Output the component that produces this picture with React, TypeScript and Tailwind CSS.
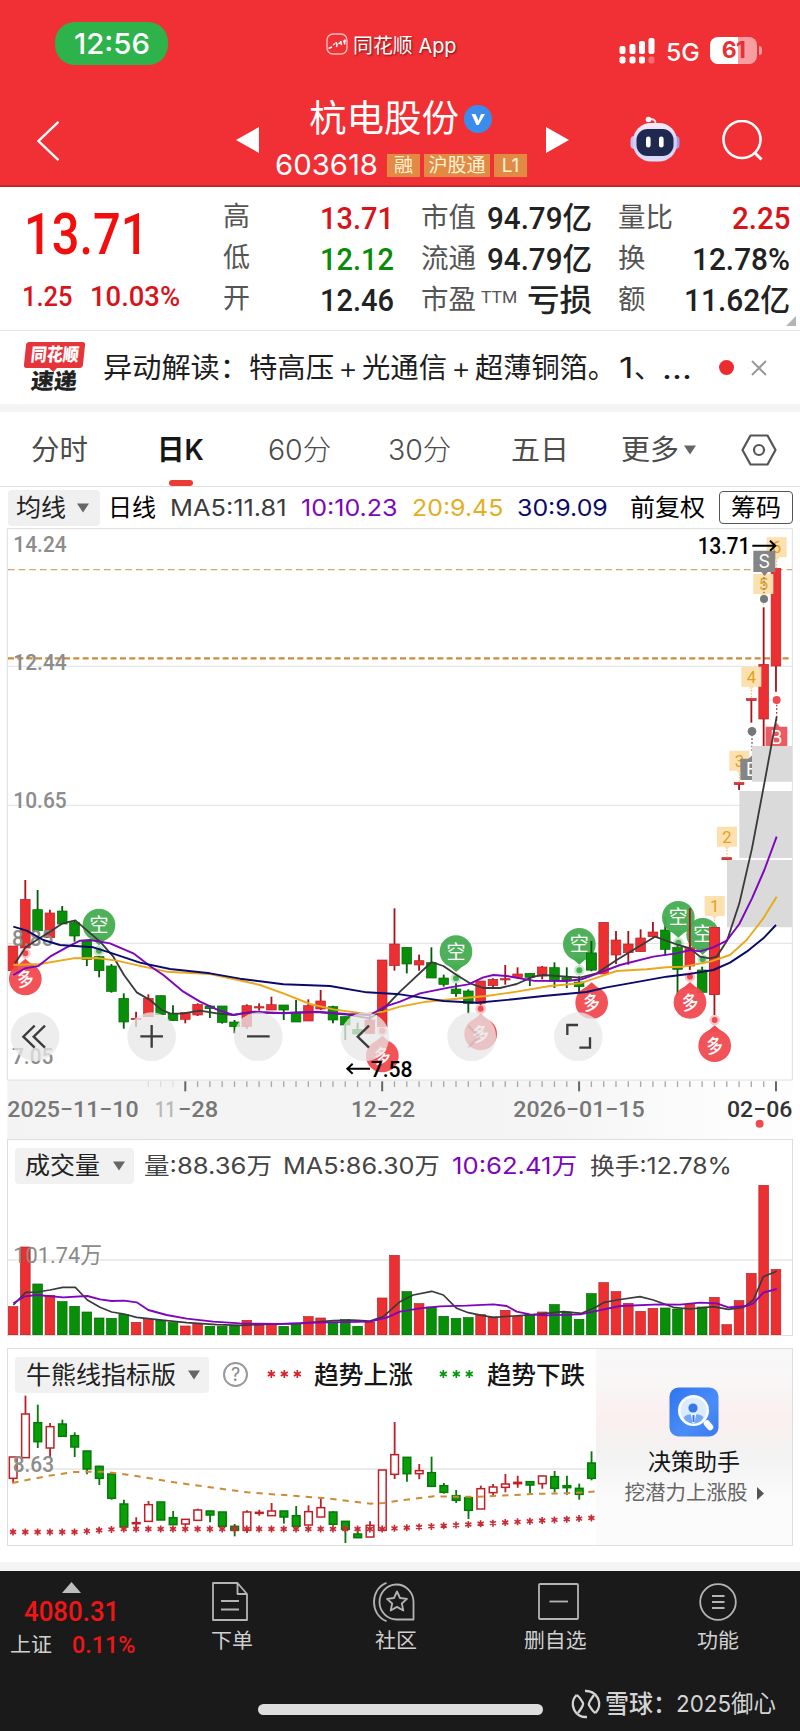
import { useLayoutEffect, useRef, type ReactNode } from "react";

const SC = "font-['Inter','Noto_Sans_CJK_SC',sans-serif]";
const DIN = "font-['Roboto','Noto_Sans_CJK_SC',sans-serif]";

/* One line of text, stretched horizontally to fill the width of its box. */
function Fit({ className = "", children }: { className?: string; children: ReactNode }) {
  const box = useRef<HTMLSpanElement>(null);
  const inner = useRef<HTMLSpanElement>(null);
  useLayoutEffect(() => {
    const b = box.current;
    const t = inner.current;
    if (b && t && t.offsetWidth) {
      t.style.transform = `scaleX(${b.clientWidth / t.offsetWidth})`;
    }
  }, [children]);
  return (
    <span ref={box} className={`block shrink-0 whitespace-nowrap ${className}`}>
      <span ref={inner} className="inline-block origin-left">
        {children}
      </span>
    </span>
  );
}

function Caret({ className = "" }: { className?: string }) {
  return (
    <svg viewBox="0 0 14 10" className={`shrink-0 ${className}`}>
      <path d="M1 .5h12L7 9.5z" fill="currentColor" />
    </svg>
  );
}

/* ---------- data, in thirds of a pixel ---------- */
type Candle = [number, number, number, number, "R" | "G"];
const STEP = 36.918;
const X0 = 39;
const cx = (i: number) => X0 + i * STEP;

const candles: Candle[] = [
  [258, 258, 332, 332, "R"], [60, 118, 264, 264, "R"], [90, 149, 212, 212, "G"], [149, 159, 233, 233, "R"],
  [138, 153, 192, 192, "G"], [180, 188, 228, 245, "G"], [243, 243, 298, 318, "G"], [288, 290, 332, 352, "G"],
  [312, 318, 394, 398, "G"], [400, 415, 486, 506, "G"], [455, 475, 479, 500, "R"], [403, 415, 470, 470, "R"],
  [407, 407, 464, 464, "G"], [436, 460, 482, 482, "G"], [458, 458, 478, 490, "R"], [430, 433, 465, 468, "R"],
  [435, 438, 446, 474, "G"], [438, 438, 487, 491, "G"], [480, 486, 500, 520, "G"], [433, 437, 500, 506, "R"],
  [430, 440, 444, 452, "R"], [410, 434, 450, 450, "R"], [435, 435, 450, 480, "G"], [420, 458, 486, 486, "G"],
  [418, 437, 483, 483, "R"], [390, 423, 447, 450, "R"], [437, 440, 480, 490, "G"], [470, 470, 495, 540, "G"],
  [488, 508, 522, 524, "G"], [460, 480, 520, 520, "R"], [300, 300, 500, 500, "R"], [145, 252, 317, 332, "R"],
  [262, 262, 312, 340, "G"], [284, 302, 315, 332, "R"], [262, 308, 354, 354, "G"], [344, 354, 373, 380, "G"],
  [370, 387, 401, 410, "G"], [388, 393, 430, 461, "G"], [363, 363, 430, 436, "R"], [355, 358, 377, 386, "R"],
  [315, 356, 360, 374, "R"], [322, 342, 352, 356, "R"], [340, 340, 352, 378, "G"], [318, 321, 348, 358, "R"],
  [307, 323, 362, 384, "G"], [322, 353, 359, 384, "G"], [349, 366, 380, 400, "G"], [243, 279, 330, 334, "G"],
  [186, 187, 342, 342, "R"], [213, 240, 285, 312, "R"], [213, 252, 278, 314, "R"], [208, 234, 275, 275, "R"],
  [186, 216, 230, 232, "R"], [172, 210, 268, 286, "G"], [255, 262, 328, 408, "G"], [145, 262, 318, 330, "R"],
  [320, 330, 397, 400, "G"], [202, 202, 403, 465, "R"], [-7, -7, -1, -1, "R"], [-232, -232, -226, -210, "R"],
  [-484, -484, -478, -412, "R"], [-758, -587, -423, -342, "R"], [-875, -875, -582, -505, "R"],
];

const volumes: [number, "R" | "G"][] = [
  [529, "R"], [350, "R"], [461, "G"], [495, "R"], [514, "G"], [528, "G"], [545, "G"], [563, "G"], [564, "G"],
  [552, "G"], [576, "R"], [568, "R"], [570, "G"], [577, "G"], [587, "R"], [582, "R"], [588, "G"], [588, "G"],
  [588, "G"], [570, "R"], [582, "R"], [580, "R"], [588, "G"], [582, "G"], [559, "R"], [563, "R"], [575, "G"],
  [568, "G"], [588, "G"], [575, "R"], [503, "R"], [375, "R"], [484, "G"], [520, "R"], [530, "G"], [558, "G"],
  [564, "G"], [562, "G"], [553, "R"], [560, "R"], [540, "R"], [558, "R"], [552, "G"], [545, "R"], [523, "G"],
  [545, "G"], [567, "G"], [490, "G"], [457, "R"], [484, "R"], [519, "R"], [543, "R"], [534, "R"], [533, "G"],
  [536, "G"], [522, "R"], [530, "G"], [501, "R"], [583, "R"], [511, "R"], [429, "R"], [165, "R"], [417, "R"],
];

const trend: Candle[] = [
  [352, 352, 416, 430, "R"], [168, 223, 354, 354, "R"], [195, 249, 306, 325, "G"], [250, 261, 325, 355, "R"],
  [240, 253, 290, 290, "G"], [278, 288, 322, 352, "G"], [334, 334, 388, 404, "G"], [378, 380, 416, 436, "G"],
  [398, 403, 476, 480, "G"], [480, 493, 562, 562, "G"], [533, 549, 552, 565, "R"], [484, 495, 545, 545, "R"],
  [487, 487, 541, 541, "G"], [514, 534, 555, 556, "G"], [538, 539, 553, 558, "R"], [507, 511, 542, 542, "R"],
  [514, 514, 526, 548, "G"], [517, 517, 560, 560, "G"], [553, 560, 572, 590, "G"], [512, 517, 572, 580, "R"],
  [510, 518, 521, 528, "R"], [490, 514, 528, 528, "R"], [514, 514, 532, 552, "G"], [499, 528, 560, 560, "G"],
  [497, 516, 556, 556, "R"], [474, 504, 532, 532, "R"], [515, 517, 554, 558, "G"], [545, 545, 569, 610, "G"],
  [570, 583, 594, 594, "G"], [545, 557, 592, 592, "R"], [391, 391, 572, 572, "R"], [247, 345, 404, 418, "R"],
  [353, 353, 402, 426, "G"], [373, 393, 402, 419, "R"], [351, 399, 440, 440, "G"], [430, 438, 458, 462, "G"],
  [451, 468, 482, 490, "G"], [472, 474, 512, 538, "G"], [438, 447, 508, 508, "R"], [433, 442, 459, 470, "R"],
  [403, 433, 443, 458, "R"], [408, 428, 432, 444, "R"], [426, 426, 436, 460, "G"], [408, 409, 432, 447, "R"],
  [394, 411, 446, 458, "G"], [408, 438, 444, 465, "G"], [432, 446, 464, 480, "G"], [335, 370, 416, 422, "G"],
];
const starY = (i: number) =>
  i < 6 ? 577 : i < 9 ? 577 - (i - 5) * 2.6 : i < 31 ? 568 : 568 - (i - 30) * 1.95;

const MA5 = "45,310 77,262 110,240 150,215 188,190 226,181 300,245 340,290 372,345 410,397 450,420 485,450 510,460 545,461 600,452 650,460 700,465 740,458 850,459 950,456 1040,464 1110,475 1147,450 1200,395 1295,306 1330,318 1370,345 1410,370 1450,384 1500,384 1550,372 1600,350 1630,345 1700,350 1740,353 1790,340 1850,300 1965,230 2035,255 2070,265 2100,290 2130,295 2150,290 2181,242 2218,130 2256,-35 2293,-230 2330,-430";
const MA10 = "40,345 75,325 115,318 150,290 200,262 240,242 270,240 330,250 400,280 450,318 490,345 550,395 600,425 650,448 700,465 760,455 850,460 950,455 1040,462 1110,465 1155,440 1200,425 1260,400 1350,382 1405,373 1450,352 1480,345 1520,348 1600,362 1700,363 1745,358 1800,338 1860,315 1960,290 2030,280 2070,270 2100,274 2140,262 2180,242 2218,192 2256,115 2293,30 2330,-70";
const MA20 = "40,315 120,312 220,295 290,294 350,302 430,320 500,335 630,342 700,357 780,375 850,400 930,432 1000,448 1100,462 1150,455 1200,440 1280,425 1400,413 1460,408 1550,395 1650,378 1740,370 1800,350 1850,333 1940,328 2000,322 2050,320 2130,305 2190,285 2240,240 2290,175 2330,110";
const MA30 = "40,200 80,212 130,240 180,255 280,262 330,278 420,308 510,327 630,340 720,356 850,373 990,378 1100,397 1200,403 1260,412 1330,423 1430,428 1540,418 1630,408 1760,396 1820,382 1900,368 2000,350 2060,343 2140,330 2190,308 2240,275 2290,235 2328,195";
const VMA5 = "40,525 77,487 110,486 150,480 188,472 226,472 262,510 300,532 335,546 372,552 410,562 500,572 560,578 650,584 720,586 830,582 900,580 1000,572 1060,570 1110,573 1150,560 1200,515 1240,495 1295,484 1330,495 1370,535 1405,548 1445,556 1480,562 1540,558 1600,554 1640,550 1690,545 1745,550 1790,530 1810,518 1850,510 1920,500 1960,510 2020,532 2070,537 2140,530 2185,538 2230,532 2260,510 2290,440 2330,424";
const VMA10 = "40,520 75,499 110,495 190,502 262,498 300,508 335,513 372,512 410,517 445,540 500,555 560,566 640,575 720,580 840,582 950,578 1110,575 1160,563 1200,545 1260,535 1320,529 1400,527 1480,523 1520,528 1550,545 1590,553 1640,556 1740,553 1780,545 1860,528 1980,523 2040,524 2100,518 2150,520 2185,532 2240,528 2260,520 2290,488 2330,477";
const BULL = "35,430 75,422 140,409 220,397 310,396 380,405 520,428 740,458 980,476 1110,492 1150,490 1200,482 1300,470 1370,471 1430,471 1500,468 1600,463 1720,460 1790,455";

/* Price labels are 68 units tall (about 23px). */
function Label({ x, y, w, fill = "#8c8c8c", size = 68, weight = 500, children }: {
  x: number; y: number; w: number; fill?: string; size?: number; weight?: number; children: string;
}) {
  return (
    <text x={x} y={y} textLength={w} lengthAdjust="spacingAndGlyphs" fill={fill} fontSize={size} fontWeight={weight} className={DIN}>
      {children}
    </text>
  );
}

function Pin({ x, y, kind, dot = 0 }: { x: number; y: number; kind: "空" | "多"; dot?: number }) {
  const up = kind === "多";
  const c = up ? "#f04a50" : "#45ad50";
  const s = up ? -1 : 1;
  return (
    <g>
      {dot !== 0 && (
        <>
          <circle cx={x} cy={dot} r="16" fill={c} opacity=".3" />
          <circle cx={x} cy={dot} r="9" fill={c} />
        </>
      )}
      <path d={`M${x - 24} ${y + s * 40}L${x} ${y + s * 61}L${x + 24} ${y + s * 40}z`} fill={c} />
      <circle cx={x} cy={y} r="49" fill={c} opacity=".95" />
      <text
        x={x} y={y + 21} textAnchor="middle" fontSize="57" fill="#fff"
        fontWeight={up ? 500 : 400}
        transform={up ? `translate(${x} ${y}) rotate(-8) scale(.88 1) translate(${-x} ${-y})` : undefined}
        className={SC}
      >
        {kind}
      </text>
    </g>
  );
}

function Flag({ x, y, n }: { x: number; y: number; n: string }) {
  return (
    <g>
      <path d={`M${x - 30} ${y - 30}h60v60h-22l-8 10l-8 -10h-22z`} fill="#fde0b0" />
      <text x={x} y={y + 18} textAnchor="middle" fontSize="50" fill="#e0a21c" className={DIN}>{n}</text>
      <path d={`M${x} ${y + 40}v24`} stroke="#e8b96a" strokeWidth="3" strokeDasharray="5 4" />
    </g>
  );
}

function PriceChart() {
  return (
    <svg viewBox="0 0 2400 1833" className="block h-[611px] w-[800px]">
      <defs>
        <linearGradient id="axis" x1="0" x2="1" y1="0" y2="0">
          <stop offset="0" stopColor="#f3f3f3" />
          <stop offset=".7" stopColor="#f5f5f5" />
          <stop offset=".92" stopColor="#fdfdfd" />
        </linearGradient>
      </defs>
      <rect x="22" y="1656" width="2356" height="177" fill="url(#axis)" />
      <path d="M22 2V1656H2377V2z" fill="#fff" stroke="#dedede" strokeWidth="3" />
      <path d="M24 415H2376M24 832H2376M24 1246H2376" stroke="#e6e6e6" strokeWidth="3.500" />
      <path d="M24 125H2376" stroke="#d1a76c" strokeWidth="3.500" strokeDasharray="20 12" />
      <path d="M24 391H2376" stroke="#cb8b3c" strokeWidth="6.500" strokeDasharray="18 10" />
      <Label x={40} y={72} w={160}>14.24</Label>
      <Label x={40} y={425} w={160}>12.44</Label>
      <Label x={40} y={841} w={160}>10.65</Label>
      <g transform="translate(0 996)">
        {candles.map(([t, a, b, l, k], i) => (
          <g key={i}>
            <path d={`M${cx(i)} ${t}V${l}`} stroke={k === "R" ? "#a8141a" : "#045c08"} strokeWidth="5.500" />
            <rect
              x={cx(i) - 14.5} y={a} width="29" height={Math.max(b - a, 4)} strokeWidth="2"
              fill={k === "R" ? "#ec2f31" : "#079007"} stroke={k === "R" ? "#b0252a" : "#056305"}
            />
          </g>
        ))}
        <Label x={36} y={258} w={124}>8.85</Label>
        <Label x={36} y={613} w={124}>7.05</Label>
        <Flag x={2144} y={138} n="1" />
        <Flag x={2181} y={-70} n="2" />
        <Flag x={2218} y={-298} n="3" />
        <Flag x={2254} y={-550} n="4" />
        <Flag x={2290} y={-828} n="5" />
        <Flag x={2330} y={-938} n="6" />
        <path d="M2221 -304h24l12-10l12 10h16v64h-64z" fill="#858585" />
        <text x="2238" y="-252" fontSize="54" fill="#fff" className={SC}>B</text>
        <path d="M2256 -376v48" stroke="#555" strokeWidth="4" strokeDasharray="5 6" />
        <circle cx="2256" cy="-386" r="13" fill="#777" />
        <path d="M2260 -928h66v64h-22l-10 12l-10 -12h-24z" fill="#858585" />
        <text x="2293" y="-877" textAnchor="middle" fontSize="54" fill="#fff" className={SC}>S</text>
        <path d="M2292 -860v60" stroke="#777" strokeWidth="4" strokeDasharray="5 6" />
        <circle cx="2292" cy="-783" r="12" fill="#777" />
        <path d="M2297 -400h24l9-12l9 12h23v60h-65z" fill="#ee5a60" />
        <text x="2329" y="-348" textAnchor="middle" fontSize="54" fill="#fff" className={SC}>B</text>
        <circle cx="2330" cy="-480" r="12" fill="#ee4a50" />
        <path d="M2330 -466v48" stroke="#b5393d" strokeWidth="4" strokeDasharray="5 6" />
        <path d="M2256 -342H2376V-235H2256zM2218 -207H2376V-6H2218zM2181 0H2376V202H2181z" fill="#dadada" />
        <Pin x={297} y={195} kind="空" dot={272} />
        <Pin x={1368} y={275} kind="空" dot={355} />
        <Pin x={1738} y={253} kind="空" dot={331} />
        <path d={`M${cx(47)} 243V279`} stroke="#045c08" strokeWidth="5.500" />
        <rect x={cx(47) - 14.5} y="279" width="29" height="51" fill="#079007" stroke="#056305" strokeWidth="2" />
        <Pin x={2035} y={172} kind="空" dot={248} />
        <Pin x={2108} y={223} kind="空" dot={298} />
        <rect x={cx(57) - 14.5} y="202" width="29" height="201" fill="#ec2f31" stroke="#b0252a" strokeWidth="2" />
        <path d={`M${cx(55)} 145V262`} stroke="#a8141a" strokeWidth="5.500" />
        <Pin x={76} y={357} kind="多" dot={280} />
        <Pin x={1147} y={588} kind="多" dot={512} />
        <Pin x={1442} y={522} kind="多" dot={446} />
        <Pin x={1775} y={428} kind="多" />
        <Pin x={2070} y={427} kind="多" dot={350} />
        <Pin x={2144} y={557} kind="多" dot={480} />
        <g fill="none" strokeWidth="5.800" strokeLinejoin="round">
          <polyline points={MA5} stroke="#3a3a3a" strokeWidth="5.500" />
          <polyline points={MA20} stroke="#eaa81b" />
          <polyline points={MA10} stroke="#7d06bd" />
          <polyline points={MA30} stroke="#0a0a6b" />
        </g>
        <g fill="#e8e8e8" opacity=".76">
          {[105, 455, 775, 1095, 1415, 1735].map((x) => (
            <circle key={x} cx={x} cy="530" r="73" />
          ))}
        </g>
        <g fill="none" stroke="#3c3c3c" strokeWidth="7">
          <path d="M104 497L70 530L104 563M135 497L101 530L135 563M421 529h68M455 495v68M741 529h68M1107 497L1073 530L1107 563" />
          <path d="M1702 525v-30h32M1770 532v31h-32" />
          <path d="M1404 497L1438 530L1404 563" opacity=".1" />
        </g>
        <path d="M1110 626H1042M1058 611L1042 626L1058 641" fill="none" stroke="#000" strokeWidth="6" />
        <Label x={1112} y={650} w={126} fill="#000">7.58</Label>
      </g>
      <Label x={2093} y={79} w={158} fill="#000" size={71}>13.71</Label>
      <path d="M2257 53H2326M2310 38L2326 53L2310 68" fill="none" stroke="#000" strokeWidth="6" />
      {Array.from({ length: 52 }, (_, k) => k + 11).map((i) => {
        const big = i % 16 === 14;
        return (
          <path key={i} d={`M${cx(i)} ${1660}v${big ? 30 : 17}`} strokeWidth={big ? 6 : 4}
            stroke={big ? "#666" : i < 14 ? "#ddd" : "#a8a8a8"} />
        );
      })}
      <Label x={22} y={1766} w={394} fill="#777">2025−11−10</Label>
      <Label x={464} y={1766} w={64} fill="#b9b9b9">11</Label>
      <Label x={534} y={1766} w={121} fill="#777">−28</Label>
      <Label x={1053} y={1766} w={192} fill="#777">12−22</Label>
      <Label x={1540} y={1766} w={394} fill="#777">2026−01−15</Label>
      <Label x={2181} y={1766} w={196} fill="#333">02−06</Label>
      <circle cx="2279" cy="1787" r="12" fill="#ee4a50" />
    </svg>
  );
}

function VolumeChart() {
  return (
    <svg viewBox="0 150 2400 472" className="block h-[157.33px] w-[800px] shrink-0">
      <path d="M24 390H2376" stroke="#e6e6e6" strokeWidth="4" />
      {volumes.map(([t, k], i) => (
        <rect key={i} x={cx(i) - 14.5} y={t + 1} width="29" height={614 - t} strokeWidth="2"
          fill={k === "R" ? "#ec2f31" : "#079007"} stroke={k === "R" ? "#b0252a" : "#056305"} />
      ))}
      <g fill="none" strokeWidth="5.500" strokeLinejoin="round">
        <polyline points={VMA5} stroke="#3a3a3a" strokeWidth="5" />
        <polyline points={VMA10} stroke="#7d06bd" />
      </g>
      <text x="40" y="399" textLength="266" lengthAdjust="spacingAndGlyphs" fontSize="68" fill="#8a8a8a" className={DIN}>101.74万</text>
    </svg>
  );
}

function Star({ x, y, r = 10.5, c }: { x: number; y: number; r?: number; c: string }) {
  const a = r * 0.87;
  const b = r * 0.5;
  return (
    <path d={`M${x} ${y - r}V${y + r}M${x - a} ${y - b}L${x + a} ${y + b}M${x - a} ${y + b}L${x + a} ${y - b}`}
      stroke={c} strokeWidth="5" fill="none" />
  );
}

function TrendChart() {
  return (
    <svg viewBox="22 160 1765 456" className="block h-[152px] w-[588.33px] shrink-0">
      <path d="M24 388H1787" stroke="#e6e6e6" strokeWidth="4" />
      {trend.map(([t, a, b, l, k], i) => {
        const c = k === "R" ? "#c11f27" : "#06790a";
        const x = cx(i) - 1.5;
        return (
          <g key={i}>
            <path d={k === "R" ? `M${x} ${t}V${a}M${x} ${b}V${l}` : `M${x} ${t}V${l}`} stroke={c} strokeWidth="5.500" />
            <rect x={x - 11.5} y={a} width="23" height={b - a} fill={k === "R" ? "#fff" : "#07a007"} stroke={c} strokeWidth="4.500" />
          </g>
        );
      })}
      <polyline points={BULL} fill="none" stroke="#cf8a35" strokeWidth="6" strokeDasharray="19 18" />
      {trend.map((_, i) => (
        <Star key={i} x={cx(i) - 2} y={starY(i)} c="#c92a35" />
      ))}
      <text x="36" y="398" textLength="124" lengthAdjust="spacingAndGlyphs" fontSize="68" fontWeight="500" fill="#8c8c8c" className={DIN}>8.63</text>
    </svg>
  );
}

function Header() {
  return (
    <header className="h-[187px] border-b-2 border-[#c3262b] bg-[#f03035] text-white">
      <div className="flex h-[88px] items-start">
        <div className="mt-[22px] ml-[55px] flex h-[43px] w-[113px] shrink-0 items-center justify-center rounded-[20px] bg-[#2eb24c]">
          <Fit className="w-[76px] text-[29px] leading-[40px] font-medium">12:56</Fit>
        </div>
        <svg viewBox="0 0 22 22" className="mt-[33px] ml-[158px] h-[22px] w-[22px] shrink-0">
          <rect x="1" y="1" width="20" height="20" rx="6" fill="none" stroke="#fbb" strokeWidth="1.400" />
          <path d="M2.500 15.500l3.500-1.500M7 12l2-1.500M9.500 9.500c2 .5 1.500 3 1 4.500M12.500 11l3-2.500M14.500 8l1 4M17.500 7.500l1.500 4M19 6.500v3" stroke="#fff" strokeWidth="1.500" fill="none" />
        </svg>
        <Fit className="mt-[31px] ml-[5px] w-[104px] text-[20.500px] leading-[30px] [text-shadow:1px_1px_2px_#7a1013]">同花顺 App</Fit>
        <svg viewBox="0 0 36 26" className="mt-[38px] ml-[162px] h-[26px] w-[36px] shrink-0" fill="#fff">
          <rect x=".5" y="8" width="6" height="8" rx="2" />
          <rect x="10.500" y="6" width="6" height="10" rx="2" />
          <rect x="20" y="3" width="6" height="13" rx="2" />
          <rect x="29.500" y="0" width="6" height="16" rx="2" />
          <rect x=".5" y="18.500" width="6" height="7" rx="2" />
          <rect x="10.500" y="18.500" width="6" height="7" rx="2" />
          <rect x="20" y="18.500" width="6" height="7" rx="2" />
          <rect x="29.500" y="18.500" width="6" height="7" rx="2" opacity=".3" />
        </svg>
        <Fit className="mt-[38px] ml-[11px] w-[34px] text-[24px] leading-[30px] font-medium">5G</Fit>
        <div className="mt-[37px] ml-[10px] flex h-[27px] w-[47px] shrink-0 items-center justify-center rounded-[8px] bg-[linear-gradient(90deg,#fff_59%,#f99ea0_59%)] text-[23px] leading-[27px] font-bold tracking-tight text-[#e53036]">
          61
        </div>
        <div className="mt-[46px] ml-[1.5px] h-[9px] w-[3px] rounded-r-full bg-[#f99ea0]" />
      </div>
      <div className="flex items-start">
        <svg viewBox="0 0 22 40" className="mt-[33px] ml-[37px] h-[40px] w-[22px]" fill="none" stroke="#fff" strokeWidth="2.400">
          <path d="M21.500 .8L1.500 20L21.500 39.200" />
        </svg>
        <svg viewBox="0 0 23 26" className="mt-[39px] ml-[177px] h-[26px] w-[23px]" fill="#fff"><path d="M23 0v26L0 13z" /></svg>
        <div className="ml-[16px] w-[253px] shrink-0">
          <div className="mt-[7px] flex items-center pl-[34px]">
            <Fit className="w-[150px] text-[37px] leading-[48px]">杭电股份</Fit>
            <svg viewBox="0 0 28 28" className="ml-[5px] h-[28px] w-[28px]">
              <circle cx="14" cy="14" r="14" fill="#3b8cec" />
              <path d="M7.500 9h4l3 6.500L17 9h4l-6.500 11h-2z" fill="#fff" />
            </svg>
          </div>
          <div className="mt-[4px] flex h-[36px] items-center">
            <Fit className="w-[103px] text-[29px] leading-[36px]">603618</Fit>
            <div className="ml-[9px] flex gap-[4px] text-[19px] leading-[23px] text-[#fff3d8]">
              <span className="flex h-[23px] w-[33px] justify-center bg-[#e28a43]">融</span>
              <span className="flex h-[23px] w-[66px] justify-center bg-[#e28a43]">沪股通</span>
              <span className="flex h-[23px] w-[33px] justify-center bg-[#e28a43]">L1</span>
            </div>
          </div>
        </div>
        <svg viewBox="0 0 23 26" className="mt-[39px] ml-[18px] h-[26px] w-[23px]" fill="#fff"><path d="M0 0v26L23 13z" /></svg>
        <svg viewBox="0 0 50 47" className="mt-[28px] ml-[61px] h-[47px] w-[50px]">
          <defs>
            <linearGradient id="bot" x1="0" x2="0" y1="0" y2="1">
              <stop offset="0" stopColor="#fbeff8" />
              <stop offset=".5" stopColor="#cfcbf6" />
              <stop offset="1" stopColor="#dcdffb" />
            </linearGradient>
          </defs>
          <path d="M25 9c1.500-4-1-6.500-5-5.500" stroke="#f9e3ec" strokeWidth="1.800" fill="none" />
          <circle cx="18.500" cy="3.500" r="2.800" fill="#fff" />
          <rect x=".5" y="20" width="8" height="13" rx="4" fill="#c9bdf0" />
          <rect x="41.500" y="20" width="8" height="13" rx="4" fill="#9f9cf0" />
          <rect x="3" y="7" width="44" height="38.500" rx="18" fill="url(#bot)" />
          <rect x="6.500" y="13" width="37" height="27" rx="11" fill="#1f2950" />
          <rect x="16" y="20.500" width="4.600" height="11" rx="2.300" fill="#fff" />
          <rect x="29" y="20.500" width="4.600" height="11" rx="2.300" fill="#fff" />
        </svg>
        <svg viewBox="0 0 42 42" className="mt-[32px] ml-[42px] h-[42px] w-[42px]" fill="none" stroke="#fff" strokeWidth="2.600">
          <circle cx="20" cy="19.500" r="18.500" />
          <path d="M32.500 32.500L39.500 39.500" strokeWidth="3" />
        </svg>
      </div>
    </header>
  );
}

function Quote() {
  return (
    <section className={`flex h-[144px] border-b border-[#e4e4e4] bg-white leading-[41px] text-[#222] ${DIN}`}>
      <div className="w-[223px] shrink-0 pt-[13px] text-[#f30d0d]">
        <Fit className="ml-[24px] w-[124px] text-[57px] leading-[70px] font-medium">13.71</Fit>
        <div className="mt-[6px] flex text-[28px] font-medium text-[#d8131a]">
          <Fit className="ml-[22px] w-[51px]">1.25</Fit>
          <Fit className="ml-[17px] w-[90px]">10.03%</Fit>
        </div>
      </div>
      <div className="grid w-[198px] shrink-0 content-start pt-[10.5px] text-[27px] text-[#555]">
        <div className="flex"><span className="w-[97px] leading-[39px]">高</span><Fit className="w-[74px] text-[31px] font-medium text-[#d8131a]">13.71</Fit></div>
        <div className="flex"><span className="w-[97px] leading-[39px]">低</span><Fit className="w-[74px] text-[31px] font-medium text-[#0a8a0a]">12.12</Fit></div>
        <div className="flex"><span className="w-[97px] leading-[39px]">开</span><Fit className="w-[74px] text-[31px] font-medium text-[#222]">12.46</Fit></div>
      </div>
      <div className="grid w-[197px] shrink-0 content-start pt-[10.5px] text-[27.5px] text-[#555]">
        <div className="flex"><span className="w-[66px] leading-[39px]">市值</span><Fit className="w-[105px] text-[31px] font-medium text-[#222]">94.79亿</Fit></div>
        <div className="flex"><span className="w-[66px] leading-[39px]">流通</span><Fit className="w-[105px] text-[31px] font-medium text-[#222]">94.79亿</Fit></div>
        <div className="flex">
          <span className="leading-[39px]">市盈</span>
          <Fit className="ml-[5px] w-[36px] text-[17px] leading-[34px]">TTM</Fit>
          <Fit className="ml-[10px] w-[65px] text-[31px] font-medium text-[#222]">亏损</Fit>
        </div>
      </div>
      <div className="grid w-[172px] shrink-0 content-start pt-[10.5px] text-[27.500px] text-[#555]">
        <div className="flex justify-between"><span className="leading-[39px]">量比</span><Fit className="w-[58px] text-[31px] font-medium text-[#d8131a]">2.25</Fit></div>
        <div className="flex justify-between"><span className="leading-[39px]">换</span><Fit className="w-[98px] text-[31px] font-medium text-[#222]">12.78%</Fit></div>
        <div className="flex justify-between"><span className="leading-[39px]">额</span><Fit className="w-[106px] text-[31px] font-medium text-[#222]">11.62亿</Fit></div>
      </div>
      <svg viewBox="0 0 10 10" className="mt-auto mb-[4px] -ml-[4px] h-[10px] w-[10px]"><path d="M10 0v10H0z" fill="#b4b4b4" /></svg>
    </section>
  );
}

function News() {
  return (
    <section className="flex h-[73px] items-center bg-white text-[28px] leading-[42px] text-[#1d1d1d]">
      <div className={`ml-[25px] flex h-[52px] w-[60px] shrink-0 flex-col font-black ${SC}`}>
        <div className="flex h-[26px] w-[59px] -skew-x-6 items-center justify-center rounded-[3px] bg-[#e5343a] text-white">
          <Fit className="w-[48px] text-[18px] leading-[26px]">同花顺</Fit>
        </div>
        <svg viewBox="0 0 8 4" className="ml-[24px] h-[4px] w-[8px]"><path d="M0 0h8L4.500 4z" fill="#e5343a" /></svg>
        <div className="-mt-[3px] ml-[6px] h-[25px] w-[46px] -skew-x-6 text-[#222]">
          <Fit className="w-[46px] text-[22px] leading-[25px]">速递</Fit>
        </div>
      </div>
      <Fit className="ml-[18px] w-[146px]">异动解读：</Fit>
      <Fit className="w-[85px]">特高压</Fit>
      <span className="w-[28px] shrink-0 text-center text-[30px] font-light">+</span>
      <Fit className="w-[85px]">光通信</Fit>
      <span className="w-[28px] shrink-0 text-center text-[30px] font-light">+</span>
      <Fit className="w-[141px]">超薄铜箔。</Fit>
      <Fit className="ml-[3px] w-[14px]">1</Fit>
      <Fit className="ml-[1px] w-[28px]">、</Fit>
      <Fit className="w-[30px] text-[30px]">...</Fit>
      <div className="ml-[27px] h-[15px] w-[15px] shrink-0 rounded-full bg-[#ec2d2f]" />
      <svg viewBox="0 0 16 16" className="ml-[17px] h-[16px] w-[16px] shrink-0" stroke="#999" strokeWidth="2"><path d="M1 1L15 15M15 1L1 15" /></svg>
    </section>
  );
}

function Tabs() {
  return (
    <nav className="flex h-[75px] border-b border-[#e2e2e2] bg-white pt-[17px] text-[28px] leading-[42px] text-[#4c4c4c]">
      <Fit className="ml-[31px] w-[57px]">分时</Fit>
      <div className="ml-[69px] flex w-[47px] flex-col items-center">
        <Fit className="w-[47px] font-semibold text-[#161616]">日K</Fit>
        <div className="mt-[9px] h-[6px] w-[24px] rounded-[3px] bg-[#ea3b34]" />
      </div>
      <Fit className="ml-[64px] w-[63px] font-light">60分</Fit>
      <Fit className="ml-[57px] w-[63px] font-light">30分</Fit>
      <Fit className="ml-[60px] w-[58px]">五日</Fit>
      <Fit className="ml-[52px] w-[58px]">更多</Fit>
      <Caret className="mt-[16px] ml-[4px] h-[10px] w-[14px] text-[#666]" />
      <svg viewBox="0 0 36 32" className="mt-[5px] ml-[44px] h-[32px] w-[36px]" fill="none" stroke="#555" strokeWidth="2.200" strokeLinejoin="round">
        <path d="M9.500 1.500h17L34.500 16l-8 14.500h-17L1.500 16z" />
        <circle cx="18" cy="16" r="5" />
      </svg>
    </nav>
  );
}

function MaRow() {
  return (
    <div className="flex h-[41px] items-center bg-white text-[23px] leading-[34px] text-[#3c3c3c]">
      <div className="ml-[8px] flex h-[36px] w-[92px] items-center rounded-[4px] bg-[#f0f0f0] text-[#222]">
        <Fit className="ml-[8px] w-[50px] text-[24px]">均线</Fit>
        <Caret className="ml-[10px] h-[10px] w-[14px] text-[#666]" />
      </div>
      <Fit className="ml-[8px] w-[48px] text-[24px] text-black">日线</Fit>
      <Fit className="ml-[14px] w-[117px]">MA5:11.81</Fit>
      <Fit className="ml-[14px] w-[97px] text-[#7d06bd]">10:10.23</Fit>
      <Fit className="ml-[14px] w-[91px] text-[#e3ae22]">20:9.45</Fit>
      <Fit className="ml-[14px] w-[91px] text-[#0a0a6b]">30:9.09</Fit>
      <Fit className="ml-[22px] w-[75px] text-[24px] text-black">前复权</Fit>
      <div className="ml-[14px] flex h-[33px] w-[74px] items-center justify-center rounded-[4px] border border-[#555] text-black">
        <Fit className="w-[50px] text-[24px] leading-[30px]">筹码</Fit>
      </div>
    </div>
  );
}

function VolumePanel() {
  return (
    <section className="mr-[7px] ml-[7px] h-[197px] overflow-hidden border border-[#dedede] bg-white">
      <div className="flex h-[40px] items-center pt-[12px] text-[23px] leading-[34px] text-[#444]">
        <div className="ml-[7px] flex h-[36px] w-[119px] items-center rounded-[4px] bg-[#f1f1f1] text-[#222]">
          <Fit className="ml-[10px] w-[75px] text-[24px]">成交量</Fit>
          <Caret className="ml-[12px] h-[10px] w-[14px] text-[#666]" />
        </div>
        <Fit className="ml-[10px] w-[128px]">量:88.36万</Fit>
        <Fit className="ml-[11px] w-[157px]">MA5:86.30万</Fit>
        <Fit className="ml-[12px] w-[125px] text-[#7d06bd]">10:62.41万</Fit>
        <Fit className="ml-[13px] w-[142px]">换手:12.78%</Fit>
      </div>
      <div className="-mt-[0.5px] -ml-[8px]"><VolumeChart /></div>
    </section>
  );
}

function TrendPanel() {
  return (
    <section className="mx-[7px] mt-[12px] flex h-[198px] border border-[#dedede] bg-white">
      <div className="w-[588px] shrink-0 overflow-hidden">
        <div className="flex h-[44px] items-center pt-[7px] text-[24.500px] leading-[34px] text-[#161616]">
          <div className="ml-[7px] flex h-[36px] w-[194px] shrink-0 items-center rounded-[4px] bg-[#f1f1f1] text-[#222]">
            <Fit className="ml-[11px] w-[150px]">牛熊线指标版</Fit>
            <Caret className="ml-[11px] h-[10px] w-[14px] text-[#666]" />
          </div>
          <div className="ml-[14px] flex h-[25px] w-[25px] shrink-0 items-center justify-center rounded-full border-2 border-[#999] text-[18px] text-[#888]">?</div>
          <svg viewBox="0 0 105 28" className="ml-[19px] h-[9.33px] w-[35px] shrink-0">
            {[13, 52, 91].map((x) => <Star key={x} x={x} y={12} r={12} c="#d8202a" />)}
          </svg>
          <Fit className="ml-[12px] w-[99px] font-medium">趋势上涨</Fit>
          <svg viewBox="0 0 105 28" className="ml-[26px] h-[9.33px] w-[35px] shrink-0">
            {[13, 52, 91].map((x) => <Star key={x} x={x} y={12} r={12} c="#07950c" />)}
          </svg>
          <Fit className="ml-[13px] w-[98px] font-medium">趋势下跌</Fit>
        </div>
        <TrendChart />
      </div>
      <div className="flex flex-1 flex-col items-center bg-[linear-gradient(180deg,#f8f8f8_0%,#f9f6f6_18%,#fbefef_36%,#f3f2f2_52%,#fafafa_75%,#fbfbfb_100%)] pt-[38px]">
        <svg viewBox="0 0 50 50" className="h-[50px] w-[50px]">
          <defs>
            <linearGradient id="tile" x1="0" x2="1" y1="0" y2="1">
              <stop offset="0" stopColor="#2f74ef" />
              <stop offset=".6" stopColor="#4a8df8" />
              <stop offset="1" stopColor="#3b78ee" />
            </linearGradient>
          </defs>
          <rect x=".5" y=".5" width="49" height="49" rx="9" fill="url(#tile)" />
          <circle cx="24.500" cy="23.500" r="15.500" fill="#fff" />
          <circle cx="24.500" cy="23.500" r="13" fill="#dcebff" />
          <circle cx="24" cy="21" r="4.600" fill="#3778e6" />
          <path d="M14.500 30.500c2-2.500 5-3 7.500-3l2.500 7 2.500-7c3 0 6 .5 7.500 3-2 4-6 6-10 6s-8-2-10-6z" fill="#74a9f7" />
          <path d="M22 27.500h5l-1.500 8.500h-2z" fill="#fff" />
          <path d="M24.500 28v7" stroke="#3778e6" strokeWidth="2" />
          <path d="M38 36.500l3 3.500" stroke="#fff" strokeWidth="6.500" strokeLinecap="round" />
        </svg>
        <Fit className="mt-[8px] w-[92px] text-[23px] leading-[34px] text-[#161616]">决策助手</Fit>
        <div className="-mt-[1px] flex items-center">
          <Fit className="w-[123px] text-[20.500px] leading-[30px] text-[#666]">挖潜力上涨股</Fit>
          <svg viewBox="0 0 7 13" className="ml-[9px] h-[13px] w-[7px]"><path d="M0 0v13l7-6.500z" fill="#555" /></svg>
        </div>
      </div>
    </section>
  );
}

function Footer() {
  return (
    <footer className="h-[160px] bg-[#1a1a1a] text-[#d0d0d0]">
      <div className="flex h-[112px]">
        <div className={`w-[180px] shrink-0 pt-[11px] text-[#f01616] ${DIN}`}>
          <svg viewBox="0 0 19 11" className="ml-[62px] block h-[11px] w-[19px]"><path d="M9.500 0L19 11H0z" fill="#bdbdbd" /></svg>
          <Fit className="mt-[3px] ml-[24px] w-[95px] text-[28px] leading-[32px] font-medium">4080.31</Fit>
          <div className="flex items-center">
            <Fit className="ml-[10px] w-[42px] text-[20.500px] leading-[34px] text-[#d0d0d0]">上证</Fit>
            <Fit className="ml-[20px] w-[63px] text-[24px] leading-[32px] font-medium">0.11%</Fit>
          </div>
        </div>
        <div className="flex w-[104px] shrink-0 flex-col items-center pt-[11px]">
          <svg viewBox="0 0 36 39" className="-ml-[4px] h-[39px] w-[36px]" fill="none" stroke="#b4b4b4" strokeWidth="1.800" strokeLinejoin="round">
            <path d="M1 1h24.500L35 12v26H1zM25.500 1v11H35M9 19h18M9 27.500h18" />
          </svg>
          <Fit className="mt-[4px] w-[42px] text-[20.500px] leading-[32px]">下单</Fit>
        </div>
        <div className="flex w-[224px] shrink-0 flex-col items-center pt-[11px]">
          <svg viewBox="0 0 42 40" className="-ml-[4px] h-[40px] w-[42px]" fill="none" stroke="#b4b4b4" strokeWidth="1.800" strokeLinejoin="round">
            <path d="M40.500 37.500H24A17 17.500 0 1 1 40.500 20z" />
            <path d="M13.500 .8C5 4 1 12 1 20s4 16 12.500 19.200" />
            <path d="M24 9.500l3 6.500 7 .8-5.200 4.700 1.500 7-6.300-3.600-6.300 3.600 1.500-7L14 16.800l7-.8z" />
          </svg>
          <Fit className="mt-[3px] w-[42px] text-[20.500px] leading-[32px]">社区</Fit>
        </div>
        <div className="flex w-[95px] shrink-0 flex-col items-center pt-[12px]">
          <svg viewBox="0 0 41 37" className="ml-[5px] h-[37px] w-[41px]" fill="none" stroke="#b4b4b4" strokeWidth="1.800">
            <rect x="1" y="1" width="39" height="35" rx="1" />
            <path d="M11.500 18.500h18.500" />
          </svg>
          <Fit className="mt-[5px] w-[63px] text-[20.500px] leading-[32px]">删自选</Fit>
        </div>
        <div className="ml-[65px] flex w-[100px] shrink-0 flex-col items-center pt-[12px]">
          <svg viewBox="0 0 38 38" className="h-[38px] w-[38px]" fill="none" stroke="#b4b4b4" strokeWidth="1.800">
            <circle cx="19" cy="19" r="17.800" />
            <path d="M13 13h12.500M13 19h12.500M13 25h12.500" />
          </svg>
          <Fit className="mt-[4px] w-[42px] text-[20.500px] leading-[32px]">功能</Fit>
        </div>
      </div>
      <div className="flex h-[42px] items-center">
        <div className="mt-[11px] ml-[258px] h-[11px] w-[285px] rounded-full bg-[#dedede]" />
        <svg viewBox="0 0 30 30" className="ml-[28px] h-[30px] w-[30px]" fill="none" stroke="#d4d4d4" strokeWidth="2.400">
          <path d="M14 2A13 13 0 0 1 24.500 24M16 28A13 13 0 0 1 5.500 6" />
          <path d="M5.500 6Q8 7 12 14Q13 16 7 24M24.500 24Q22 23 18 16Q17 14 23 6" />
        </svg>
        <Fit className="ml-[4px] w-[72px] text-[25px] leading-[34px] font-medium text-[#d4d4d4]">雪球：</Fit>
        <Fit className="-ml-[1px] w-[100px] text-[23.500px] leading-[34px] text-[#d4d4d4]">2025御心</Fit>
      </div>
    </footer>
  );
}

export default function App() {
  return (
    <div className={`w-[800px] overflow-hidden bg-white ${SC}`}>
      <Header />
      <Quote />
      <News />
      <div className="h-[8px] bg-[#f4f4f4]" />
      <Tabs />
      <MaRow />
      <PriceChart />
      <VolumePanel />
      <TrendPanel />
      <div className="h-[16px]" />
      <div className="h-[9px] bg-[#f4f4f4]" />
      <Footer />
    </div>
  );
}
